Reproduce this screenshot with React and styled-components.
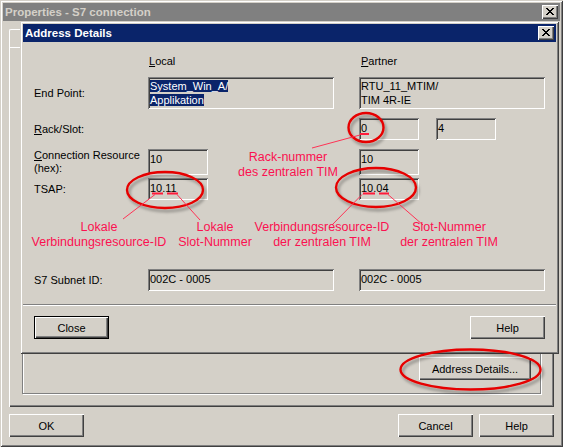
import React from 'react';
import styled, { createGlobalStyle, css } from 'styled-components';

const FACE = '#d4d0c8';
const NAVY = '#0a246a';
const RED_TEXT = '#fb1150';

const GlobalStyle = createGlobalStyle`
  html, body { margin: 0; padding: 0; background: ${FACE}; }
  body { font-family: "Liberation Sans", Arial, sans-serif; font-size: 11px; color: #000; }
  * { box-sizing: border-box; }
`;

const windowRaised = css`
  box-shadow: inset 1px 1px ${FACE}, inset -1px -1px #404040, inset 2px 2px #ffffff, inset -2px -2px #808080;
`;
const buttonRaised = css`
  box-shadow: inset 1px 1px #ffffff, inset -1px -1px #404040, inset -2px -2px #808080;
`;
const sunken = css`
  box-shadow: inset 1px 1px #808080, inset -1px -1px #ffffff, inset 2px 2px #404040, inset -2px -2px ${FACE};
`;

const Window = styled.div`
  position: relative;
  width: 563px;
  height: 447px;
  padding: 3px;
  background: ${FACE};
  ${windowRaised}
  display: flex;
  flex-direction: column;
  overflow: hidden;
`;

const TitleBar = styled.div`
  flex: none;
  height: 18px;
  display: flex;
  align-items: center;
  justify-content: space-between;
  padding: 0 2px;
  background: ${p => (p.$active ? NAVY : '#808080')};
  color: ${p => (p.$active ? '#ffffff' : FACE)};
  font: bold 11.5px "Liberation Sans", Arial, sans-serif;
  white-space: nowrap;
`;

const CloseBox = styled.div`
  width: 16px;
  height: 14px;
  background: ${FACE};
  ${buttonRaised}
  display: flex;
  align-items: center;
  justify-content: center;
  padding: 0 0 1px 0;
`;

const XGlyph = () => (
  <svg width="8" height="7" viewBox="0 0 8 7" shapeRendering="crispEdges">
    <path
      fill="#000"
      d="M0 0h2v1H0z M6 0h2v1H6z M1 1h2v1H1z M5 1h2v1H5z M2 2h4v1H2z M3 3h2v1H3z M2 4h4v1H2z M1 5h2v1H1z M5 5h2v1H5z M0 6h2v1H0z M6 6h2v1H6z"
    />
  </svg>
);

const Body = styled.div`
  flex: 1;
  display: flex;
  flex-direction: column;
  gap: 7px;
  padding: 8px 6px 7px 6px;
`;

const TabControl = styled.div`
  flex: 1;
  display: flex;
  flex-direction: column;
`;

const TabStrip = styled.div`
  flex: none;
  height: 19px;
  display: flex;
`;

const Tab = styled.div`
  width: 70px;
  height: 100%;
  border-top: 1px solid #ffffff;
  border-left: 1px solid #ffffff;
  border-right: 1px solid #404040;
  border-top-left-radius: 2px;
  border-top-right-radius: 2px;
`;

const TabPanel = styled.div`
  flex: 1;
  margin-top: -1px;
  ${windowRaised}
  box-shadow: inset 1px 1px #ffffff, inset -1px -1px #404040, inset -2px -2px #808080;
  padding: 0 13px 13px 13px;
  display: flex;
  flex-direction: column;
  justify-content: flex-end;
`;

const GroupBox = styled.div`
  height: 134px;
  border: 1px solid #808080;
  box-shadow: inset 1px 1px #ffffff, 1px 1px #ffffff;
  display: flex;
  align-items: flex-end;
  justify-content: flex-end;
  padding: 0 9px 13px 0;
`;

const Button = styled.div`
  flex: none;
  width: ${p => p.$w || 75}px;
  height: 23px;
  display: flex;
  align-items: center;
  justify-content: center;
  background: ${FACE};
  font: 11px "Liberation Sans", Arial, sans-serif;
  ${buttonRaised}
  ${p =>
    p.$default &&
    css`
      box-shadow: inset 0 0 0 1px #000, inset 2px 2px #ffffff, inset -2px -2px #404040, inset -3px -3px #808080;
    `}
`;

const ButtonRow = styled.div`
  flex: none;
  display: flex;
  align-items: center;
  gap: 6px;
  padding: ${p => p.$pad || '0'};
  margin-top: ${p => p.$mt || 0}px;
`;

const Spacer = styled.div`
  flex: 1;
`;

const Dialog = styled.div`
  position: absolute;
  left: 20px;
  top: 21px;
  width: 539px;
  height: 333px;
  padding: 3px;
  background: ${FACE};
  ${windowRaised}
  display: flex;
  flex-direction: column;
`;

const DialogContent = styled.div`
  flex: 1;
  display: flex;
  flex-direction: column;
`;

const FieldRow = styled.div`
  flex: none;
  display: grid;
  grid-template-columns: 114px 186px 25px 186px;
  padding-left: 11px;
  margin-top: ${p => p.$mt}px;
  height: ${p => p.$h}px;
`;

const Label = styled.div`
  align-self: ${p => p.$align || 'center'};
  line-height: 13px;
  padding-left: ${p => p.$pl || 0}px;
  white-space: nowrap;
`;

const Cell = styled.div`
  grid-column: ${p => p.$col};
  display: flex;
  gap: 17px;
  height: 100%;
`;

const Field = styled.div`
  width: ${p => (p.$w ? `${p.$w}px` : '100%')};
  height: 100%;
  padding: ${p => (p.$multi ? '2px 2px 0 2px' : '2px 2px 0 2px')};
  line-height: ${p => (p.$multi ? '14px' : '17px')};
  ${sunken}
  background: ${FACE};
  white-space: nowrap;
`;

const Selected = styled.span`
  background: ${NAVY};
  color: #ffffff;
`;

const Separator = styled.div`
  flex: none;
  margin-top: 13px;
  height: 2px;
  border-top: 1px solid #808080;
  border-bottom: 1px solid #ffffff;
`;

const Overlay = styled.div`
  position: absolute;
  inset: 0;
  pointer-events: none;
`;

const OverlaySvg = styled.svg`
  position: absolute;
  left: 0;
  top: 0;
`;

const Note = styled.div`
  position: absolute;
  left: ${p => p.$cx}px;
  top: ${p => p.$top}px;
  transform: translateX(-50%);
  color: ${RED_TEXT};
  font: 12.5px "Liberation Sans", Arial, sans-serif;
  line-height: 14.5px;
  text-align: center;
  white-space: nowrap;
`;

const Annotations = () => (
  <Overlay>
    <OverlaySvg width="563" height="447" viewBox="0 0 563 447">
      <defs>
        <filter id="soft" x="-30%" y="-30%" width="160%" height="180%">
          <feDropShadow dx="2" dy="3" stdDeviation="1.8" floodColor="#000" floodOpacity="0.35" />
        </filter>
      </defs>
      <g fill="none" stroke="#e60000" strokeWidth="2.4" filter="url(#soft)">
        <ellipse cx="165" cy="190" rx="38" ry="18" />
        <ellipse cx="366" cy="127.5" rx="17.5" ry="14.5" />
        <ellipse cx="376" cy="187.5" rx="40" ry="19.5" />
        <ellipse cx="470.5" cy="369.5" rx="70" ry="20" />
      </g>
      <g stroke="#ff1a3a" strokeWidth="2" fill="none">
        <path d="M152 193.5h11 M167 193.5h11" />
        <path d="M363 193.5h12 M379 193.5h10" />
        <path d="M360 134h9" />
      </g>
      <g stroke="#ff3355" strokeWidth="1" fill="none">
        <path d="M155 194.5L123 219" />
        <path d="M177 194.5L200 220" />
        <path d="M362 194.5L332 225" />
        <path d="M388 194.5L423 225" />
        <path d="M360 135L312 148" />
      </g>
    </OverlaySvg>
    <Note $cx={288} $top={150}>
      Rack-nummer
      <br />
      des zentralen TIM
    </Note>
    <Note $cx={99} $top={220}>
      Lokale
      <br />
      Verbindungsresource-ID
    </Note>
    <Note $cx={215} $top={220}>
      Lokale
      <br />
      Slot-Nummer
    </Note>
    <Note $cx={322} $top={220}>
      Verbindungsresource-ID
      <br />
      der zentralen TIM
    </Note>
    <Note $cx={449} $top={220}>
      Slot-Nummer
      <br />
      der zentralen TIM
    </Note>
  </Overlay>
);

export default function App() {
  return (
    <>
      <GlobalStyle />
      <Window>
        <TitleBar>
          <span>Properties - S7 connection</span>
          <CloseBox>
            <XGlyph />
          </CloseBox>
        </TitleBar>
        <Body>
          <TabControl>
            <TabStrip>
              <Tab />
            </TabStrip>
            <TabPanel>
              <GroupBox>
                <Button $w={112}>Address Details...</Button>
              </GroupBox>
            </TabPanel>
          </TabControl>
          <ButtonRow>
            <Button>OK</Button>
            <Spacer />
            <Button>Cancel</Button>
            <Button>Help</Button>
          </ButtonRow>
        </Body>

        <Dialog>
          <TitleBar $active>
            <span>Address Details</span>
            <CloseBox>
              <XGlyph />
            </CloseBox>
          </TitleBar>
          <DialogContent>
            <FieldRow $mt={12} $h={14}>
              <Cell $col={2}>
                <Label $pl={1}>
                  <u>L</u>ocal
                </Label>
              </Cell>
              <Cell $col={4}>
                <Label $pl={2}>
                  <u>P</u>artner
                </Label>
              </Cell>
            </FieldRow>

            <FieldRow $mt={9} $h={32}>
              <Label>End Point:</Label>
              <Cell $col={2}>
                <Field $multi>
                  <Selected>System_Win_A/</Selected>
                  <br />
                  <Selected>Applikation</Selected>
                </Field>
              </Cell>
              <Cell $col={4}>
                <Field $multi>
                  RTU_11_MTIM/
                  <br />
                  TIM 4R-IE
                </Field>
              </Cell>
            </FieldRow>

            <FieldRow $mt={9} $h={22}>
              <Label>
                <u>R</u>ack/Slot:
              </Label>
              <Cell $col={4}>
                <Field $w={60}>0</Field>
                <Field $w={60}>4</Field>
              </Cell>
            </FieldRow>

            <FieldRow $mt={9} $h={22}>
              <Label $align="start">
                <u>C</u>onnection Resource
                <br />
                (hex):
              </Label>
              <Cell $col={2}>
                <Field $w={60}>10</Field>
              </Cell>
              <Cell $col={4}>
                <Field $w={60}>10</Field>
              </Cell>
            </FieldRow>

            <FieldRow $mt={7} $h={22}>
              <Label>TSAP:</Label>
              <Cell $col={2}>
                <Field $w={60}>10.11</Field>
              </Cell>
              <Cell $col={4}>
                <Field $w={60}>10.04</Field>
              </Cell>
            </FieldRow>

            <FieldRow $mt={69} $h={22}>
              <Label>S7 Subnet ID:</Label>
              <Cell $col={2}>
                <Field>002C - 0005</Field>
              </Cell>
              <Cell $col={4}>
                <Field>002C - 0005</Field>
              </Cell>
            </FieldRow>

            <Separator />

            <ButtonRow $mt={10} $pad="0 11px 0 11px">
              <Button $default>Close</Button>
              <Spacer />
              <Button>Help</Button>
            </ButtonRow>
          </DialogContent>
        </Dialog>

        <Annotations />
      </Window>
    </>
  );
}
